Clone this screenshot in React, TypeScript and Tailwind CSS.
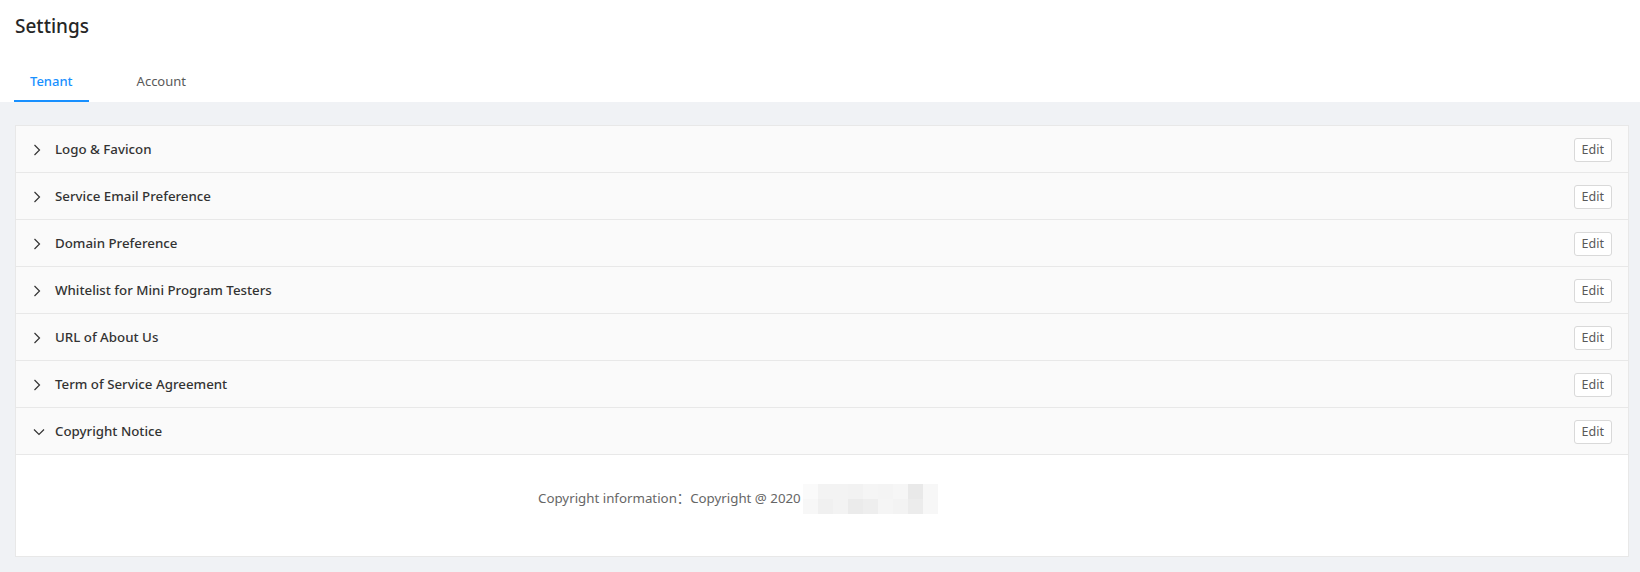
import React from 'react';

const sections = [
  'Logo & Favicon',
  'Service Email Preference',
  'Domain Preference',
  'Whitelist for Mini Program Testers',
  'URL of About Us',
  'Term of Service Agreement',
  'Copyright Notice',
];

const mosaicTop = ['#fafafa', '#f3f3f3', '#f3f3f3', '#f2f2f2', '#f5f5f5', '#f4f4f4', '#f6f6f6', '#e9e9e9', '#f7f7f7'];
const mosaicBottom = ['#f7f7f7', '#f0f0f0', '#f3f3f3', '#ebebeb', '#eeeeee', '#f5f5f5', '#f3f3f3', '#ececec', '#f7f7f7'];

const ChevronRight = () => (
  <svg width="8" height="12" viewBox="0 0 8 12" fill="none" className="shrink-0">
    <path d="M1.5 1L6.5 6L1.5 11" stroke="#333" strokeWidth="1.2" />
  </svg>
);

const ChevronDown = () => (
  <svg width="12" height="8" viewBox="0 0 12 8" fill="none" className="shrink-0">
    <path d="M1 1.5L6 6.5L11 1.5" stroke="#333" strokeWidth="1.2" />
  </svg>
);

const App: React.FC = () => {
  return (
    <div className="h-[572px] bg-[#f0f2f5] font-['Noto_Sans','Noto_Sans_CJK_SC',sans-serif] flex flex-col">
      <div className="bg-white px-[14px]">
        <h1 className="pt-[12px] pl-[1px] text-[19px] leading-[28px] font-medium text-[#262626]">Settings</h1>
        <div className="mt-[17px] flex gap-8">
          <div className="px-4 pt-[14px] pb-[8px] border-b-2 border-[#1890ff] text-[13px] leading-[21px] font-medium text-[#1890ff]">
            Tenant
          </div>
          <div className="px-4 pt-[14px] pb-[8px] text-[13px] leading-[21px] text-[#595959]">Account</div>
        </div>
      </div>

      <div className="flex-1 pt-[23px] pb-[15px] pl-[15px] pr-[11px]">
        <div className="border border-[#e8e8e8] bg-white">
          {sections.map((title, i) => {
            const open = i === sections.length - 1;
            return (
              <div
                key={title}
                className="h-[47px] flex items-center bg-[#fafafa] border-b border-[#e8e8e8] pl-[17px] pr-[16px]"
              >
                <div className="w-[22px] flex items-center pt-[1px]">{open ? <ChevronDown /> : <ChevronRight />}</div>
                <span className="pt-[2px] text-[13.3px] font-medium text-[#333]">{title}</span>
                <button className="ml-auto mt-[2px] h-[24px] px-[7px] rounded-[3px] border border-[#d9d9d9] bg-white text-[12.5px] leading-none text-[#595959]">
                  Edit
                </button>
              </div>
            );
          })}
          <div className="h-[101px] pt-[29px] pl-[522px]">
            <div className="flex items-center">
              <span className="text-[13.3px] text-[#666]">Copyright information：Copyright @ 2020</span>
              <div className="ml-[2px] flex flex-col">
                <div className="flex">
                  {mosaicTop.map((c, k) => (
                    <div key={k} className="w-[15px] h-[15px]" style={{ backgroundColor: c }} />
                  ))}
                </div>
                <div className="flex">
                  {mosaicBottom.map((c, k) => (
                    <div key={k} className="w-[15px] h-[15px]" style={{ backgroundColor: c }} />
                  ))}
                </div>
              </div>
            </div>
          </div>
        </div>
      </div>
    </div>
  );
};

export default App;
